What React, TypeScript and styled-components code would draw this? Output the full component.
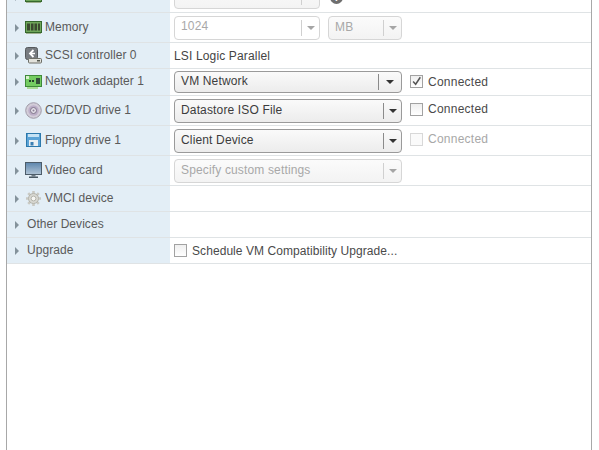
import * as React from 'react';
import styled, { createGlobalStyle } from 'styled-components';

const GlobalStyle = createGlobalStyle`
  html, body {
    margin: 0;
    padding: 0;
    width: 599px;
    height: 450px;
    overflow: hidden;
    background: #fff;
    font-family: "Liberation Sans", Arial, sans-serif;
  }
`;

const Panel = styled.div`
  box-sizing: border-box;
  width: 586px;
  height: 468px;
  margin: -18px 0 0 6px;
  border-left: 1px solid #a8a8a8;
  border-right: 1px solid #a8a8a8;
`;

const Row = styled.div<{ $h: number }>`
  box-sizing: border-box;
  display: flex;
  height: ${p => p.$h}px;
  border-bottom: 1px solid #dfe3e5;
`;

const LabelCell = styled.div`
  display: flex;
  align-items: center;
  width: 163px;
  flex: none;
  background: #e3eef6;
  color: #5a5a5a;
  font-size: 12px;
`;

const Arrow = styled.span`
  width: 0;
  height: 0;
  margin-left: 8px;
  border-left: 4px solid #84929b;
  border-top: 4px solid transparent;
  border-bottom: 4px solid transparent;
`;

const IconSlot = styled.span`
  display: flex;
  align-items: center;
  justify-content: center;
  width: 17px;
  height: 18px;
  margin-left: 6px;
  margin-right: 3px;
  margin-bottom: 1px;
`;

const LabelText = styled.span<{ $plain?: boolean }>`
  margin-left: ${p => (p.$plain ? 8 : 0)}px;
  padding-bottom: 2px;
  letter-spacing: 0.05px;
`;

const ValueCell = styled.div`
  display: flex;
  align-items: center;
  flex: 1;
  padding-left: 4px;
  color: #444;
  font-size: 12px;
  letter-spacing: 0.15px;
`;

const SelectBox = styled.div<{ $w: number; $h: number; $off?: boolean; $input?: boolean }>`
  box-sizing: border-box;
  display: flex;
  align-items: center;
  flex: none;
  width: ${p => p.$w}px;
  height: ${p => p.$h}px;
  border: 1px solid ${p => (p.$off ? '#d6d6d6' : '#9a9a9a')};
  border-radius: 4px;
  color: ${p => (p.$off ? '#a8a8a8' : '#3c3c3c')};
  background: ${p =>
    p.$input
      ? '#fff'
      : p.$off
        ? 'linear-gradient(#fbfbfb, #f3f3f3)'
        : 'linear-gradient(#fafafa, #ececec)'};
`;

const SelectText = styled.span<{ $input?: boolean }>`
  flex: 1;
  padding-left: 6px;
  padding-bottom: ${p => (p.$input ? 4 : 2)}px;
  white-space: nowrap;
  overflow: hidden;
`;

const Caret = styled.span<{ $w: number; $off?: boolean }>`
  display: flex;
  align-items: center;
  justify-content: center;
  flex: none;
  align-self: center;
  box-sizing: border-box;
  width: ${p => p.$w}px;
  height: 16px;
  border-left: 1px solid ${p => (p.$off ? '#d0d0d0' : '#8a8a8a')};
  &::after {
    content: '';
    width: 0;
    height: 0;
    border-left: 4px solid transparent;
    border-right: 4px solid transparent;
    border-top: 4px solid ${p => (p.$off ? '#a5a5a5' : '#333')};
  }
`;

const SmallGap = styled.span`
  width: 8px;
  flex: none;
`;

const CheckLabel = styled.label<{ $off?: boolean; $gap: number; $lift: number }>`
  display: flex;
  align-items: center;
  gap: 5px;
  margin-left: ${p => p.$gap}px;
  margin-bottom: ${p => p.$lift}px;
  color: ${p => (p.$off ? '#a8a8a8' : '#4a4a4a')};
`;

const ConnectedText = styled.span`
  letter-spacing: 0.25px;
`;

const UpgradeText = styled.span`
  letter-spacing: 0.07px;
`;

const CheckBox = styled.span<{ $off?: boolean }>`
  display: flex;
  align-items: center;
  justify-content: center;
  box-sizing: border-box;
  width: 13px;
  height: 13px;
  border: 1px solid ${p => (p.$off ? '#d8d8d8' : '#a2a2a2')};
  background: ${p => (p.$off ? '#fafafa' : 'linear-gradient(#efefef, #fff)')};
`;

const InfoDot = styled.span`
  display: flex;
  align-items: center;
  justify-content: center;
  width: 13px;
  height: 13px;
  margin-left: 10px;
  border-radius: 50%;
  background: #6e6e6e;
  color: #fff;
  font-size: 10px;
  font-weight: bold;
`;

const MemoryIcon = () => (
  <svg width="17" height="13" viewBox="0 0 17 13">
    <rect x="0.5" y="0.5" width="16" height="11" fill="#6fa65a" stroke="#35682c" />
    <path d="M2 2.5h3v7H2zM6 2.5h2.5v7H6zM9.5 2.5H12v7H9.5zM13 2.5h2v7h-2z" fill="#3b4a30" />
    <path d="M1 12h15v1H1z" fill="#9fb08f" />
  </svg>
);

const ScsiIcon = () => (
  <svg width="17" height="17" viewBox="0 0 17 17">
    <rect x="0.5" y="0.5" width="12" height="12" rx="2" fill="#777b80" stroke="#55595c" />
    <path d="M8.5 3L5 6.5 8.5 10" fill="none" stroke="#fff" strokeWidth="1.8" />
    <path d="M5.5 6.5h4.5" stroke="#fff" strokeWidth="1.5" />
    <rect x="3.5" y="11.5" width="13" height="4.5" rx="1" fill="#e2e2dc" stroke="#6e6f68" />
    <rect x="12" y="13" width="3" height="1.5" fill="#55584f" />
  </svg>
);

const NetworkIcon = () => (
  <svg width="17" height="14" viewBox="0 0 17 14">
    <rect x="0.5" y="0.5" width="16" height="11" fill="#74cc62" stroke="#3f8a3a" />
    <path d="M1 1h3v3H1z" fill="#d8f0cc" />
    <rect x="4" y="5" width="2" height="2" fill="#24402a" />
    <rect x="7" y="5" width="2" height="2" fill="#24402a" />
    <rect x="11" y="3" width="4" height="6" fill="#34503a" />
    <path d="M2 12h11v2H2z" fill="#a9dc96" />
  </svg>
);

const DiscIcon = () => (
  <svg width="17" height="17" viewBox="0 0 17 17">
    <circle cx="8.5" cy="8.5" r="7.8" fill="#d2ccd8" stroke="#a09ba8" />
    <circle cx="8.5" cy="8.5" r="5.2" fill="#bcaec8" />
    <circle cx="8.5" cy="8.5" r="3" fill="#e4e0ea" stroke="#7f7589" />
    <circle cx="8.5" cy="8.5" r="1" fill="#8d8398" />
  </svg>
);

const FloppyIcon = () => (
  <svg width="15" height="14" viewBox="0 0 15 14">
    <rect x="0.5" y="0.5" width="14" height="13" fill="#5ba3d6" stroke="#2c78ab" />
    <rect x="2" y="1" width="11" height="3" fill="#c5e2f4" />
    <rect x="3" y="7" width="9" height="6" fill="#e9eff3" />
    <rect x="4.5" y="9" width="3" height="3.5" fill="#3a7fb3" />
  </svg>
);

const MonitorIcon = () => (
  <svg width="17" height="16" viewBox="0 0 17 16">
    <defs>
      <linearGradient id="screen" x1="0" y1="0" x2="0" y2="1">
        <stop offset="0" stopColor="#5d86ad" />
        <stop offset="1" stopColor="#b2c5d6" />
      </linearGradient>
    </defs>
    <rect x="0.5" y="0.5" width="16" height="12" fill="url(#screen)" stroke="#4c5c69" />
    <path d="M6.5 13h4v1.5h-4z" fill="#6d7b85" />
    <path d="M4 14.5h9V16H4z" fill="#4a5964" />
  </svg>
);

const GearIcon = () => (
  <svg width="17" height="17" viewBox="0 0 17 17">
    <g stroke="#c9c9c3" strokeWidth="2.6">
      <path d="M8.5 1v15M1 8.5h15M3.2 3.2l10.6 10.6M13.8 3.2L3.2 13.8" />
    </g>
    <circle cx="8.5" cy="8.5" r="5" fill="#d8d8d2" stroke="#b4b4ac" />
    <circle cx="8.5" cy="8.5" r="2.4" fill="#f6f6f3" stroke="#b4b4ac" />
  </svg>
);

const Tick = () => (
  <svg width="13" height="13" viewBox="0 0 13 13">
    <path d="M2.5 6.5l3 3.2L11 1.5" fill="none" stroke="#555" strokeWidth="1.8" />
  </svg>
);

type SelectProps = {
  text: string;
  w?: number;
  h?: number;
  caret?: number;
  off?: boolean;
  input?: boolean;
};

const Select: React.FC<SelectProps> = ({ text, w = 228, h = 24, caret = 18, off, input }) => (
  <SelectBox $w={w} $h={h} $off={off} $input={input}>
    <SelectText $input={input}>{text}</SelectText>
    <Caret $w={caret} $off={off} />
  </SelectBox>
);

const Connected: React.FC<{ checked?: boolean; off?: boolean; lift?: number }> = ({
  checked,
  off,
  lift = 3,
}) => (
  <CheckLabel $off={off} $gap={8} $lift={lift}>
    <CheckBox $off={off}>{checked && <Tick />}</CheckBox>
    <ConnectedText>Connected</ConnectedText>
  </CheckLabel>
);

type HardwareRow = {
  label: string;
  h: number;
  icon?: React.ReactNode;
  value?: React.ReactNode;
};

const rows: HardwareRow[] = [
  {
    label: 'CPU',
    h: 31,
    icon: <MemoryIcon />,
    value: (
      <>
        <Select text="1" w={146} off />
        <InfoDot>i</InfoDot>
      </>
    ),
  },
  {
    label: 'Memory',
    h: 30,
    icon: <MemoryIcon />,
    value: (
      <>
        <Select text="1024" w={146} off input />
        <SmallGap />
        <Select text="MB" w={74} off />
      </>
    ),
  },
  { label: 'SCSI controller 0', h: 26, icon: <ScsiIcon />, value: 'LSI Logic Parallel' },
  {
    label: 'Network adapter 1',
    h: 27,
    icon: <NetworkIcon />,
    value: (
      <>
        <Select text="VM Network" h={22} caret={23} />
        <Connected checked lift={1} />
      </>
    ),
  },
  {
    label: 'CD/DVD drive 1',
    h: 30,
    icon: <DiscIcon />,
    value: (
      <>
        <Select text="Datastore ISO File" />
        <Connected />
      </>
    ),
  },
  {
    label: 'Floppy drive 1',
    h: 30,
    icon: <FloppyIcon />,
    value: (
      <>
        <Select text="Client Device" />
        <Connected off />
      </>
    ),
  },
  {
    label: 'Video card',
    h: 30,
    icon: <MonitorIcon />,
    value: <Select text="Specify custom settings" off />,
  },
  { label: 'VMCI device', h: 26, icon: <GearIcon /> },
  { label: 'Other Devices', h: 26 },
  {
    label: 'Upgrade',
    h: 26,
    value: (
      <CheckLabel $gap={0} $lift={0}>
        <CheckBox />
        <UpgradeText>Schedule VM Compatibility Upgrade...</UpgradeText>
      </CheckLabel>
    ),
  },
];

export default function App() {
  return (
    <>
      <GlobalStyle />
      <Panel>
        {rows.map(row => (
          <Row key={row.label} $h={row.h}>
            <LabelCell>
              <Arrow />
              {row.icon && <IconSlot>{row.icon}</IconSlot>}
              <LabelText $plain={!row.icon}>{row.label}</LabelText>
            </LabelCell>
            <ValueCell>{row.value}</ValueCell>
          </Row>
        ))}
      </Panel>
    </>
  );
}
